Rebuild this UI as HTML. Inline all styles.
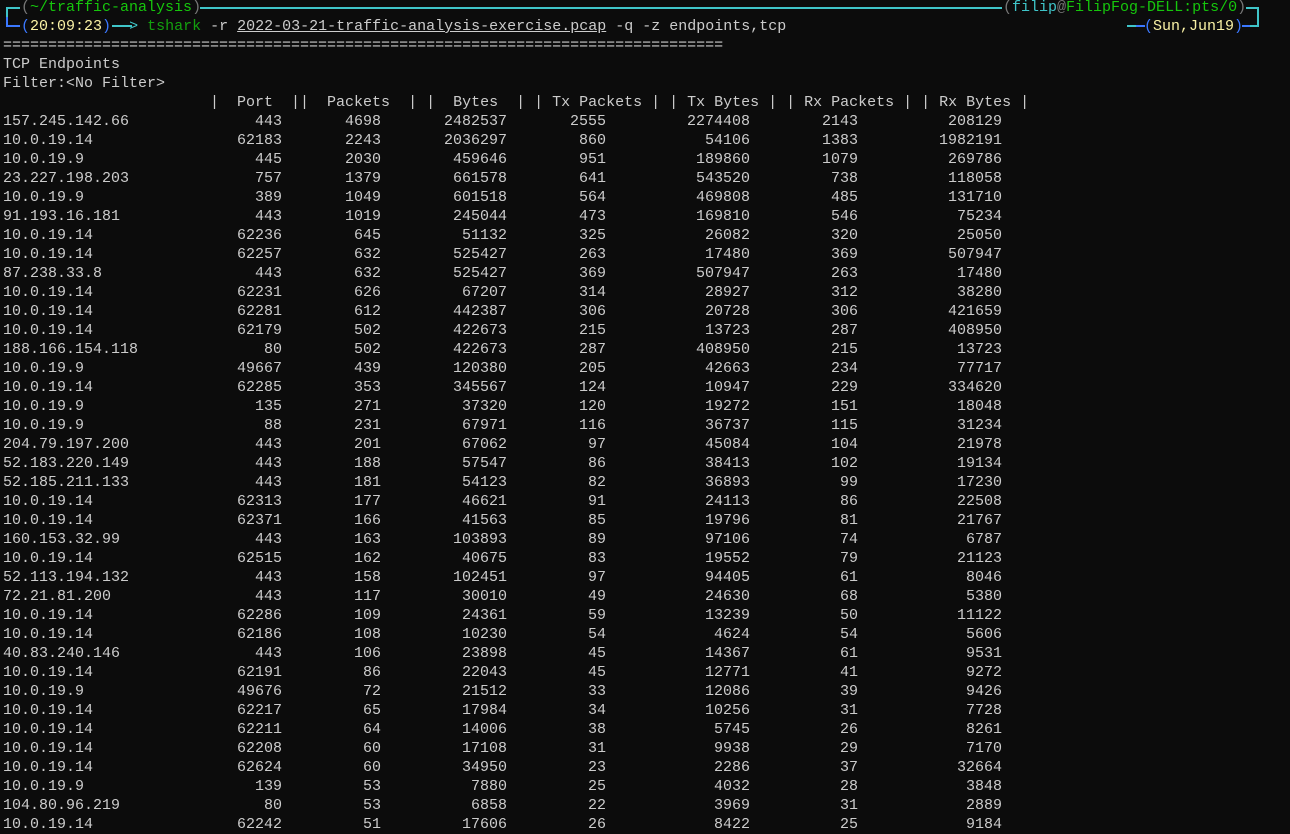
<!DOCTYPE html>
<html><head><meta charset="utf-8"><style>
html,body{margin:0;padding:0;background:#0c0c0c;width:1290px;height:834px;overflow:hidden}
#t{position:absolute;left:3px;top:-2px;font-family:"Liberation Mono",monospace;font-size:15px;line-height:19px;color:#cccccc;white-space:pre}
.ab{position:absolute;font-family:"Liberation Mono",monospace;font-size:15px;line-height:19px;white-space:pre}
.r span{display:inline-block;text-align:right}
.r span:first-child{text-align:left;width:207px}
.b{width:72px}.c{width:99px}.d{width:126px}.e{width:99px}.f{width:144px}.g{width:108px}.h{width:144px}
.ln{position:absolute;background:#3fc5c9}
.bl{background:#3b78ff}
.cy{color:#3fc5c9}.gr{color:#16c60c}.gy{color:#767676}.yl{color:#f9f1a5}.bu{color:#3b78ff}.dg{color:#13a10e}
</style></head><body>
<div class="ln" style="left:6px;top:7px;width:2px;height:10px"></div>
<div class="ln" style="left:6px;top:7px;width:14px;height:2px"></div>
<div class="ln bl" style="left:6px;top:17px;width:2px;height:10px"></div>
<div class="ln bl" style="left:6px;top:25px;width:14px;height:2px"></div>
<div class="ln" style="left:200px;top:7px;width:802px;height:2px"></div>
<div class="ln" style="left:1246px;top:7px;width:13px;height:2px"></div>
<div class="ln" style="left:1257px;top:7px;width:2px;height:20px"></div>
<div class="ln" style="left:1250px;top:25px;width:9px;height:2px"></div>
<div class="ln bl" style="left:1242px;top:25px;width:8px;height:2px"></div>
<div class="ln" style="left:1127px;top:25px;width:9px;height:2px"></div>
<div class="ln bl" style="left:1136px;top:25px;width:9px;height:2px"></div>
<div class="ln" style="left:112px;top:25px;width:20px;height:2px"></div>
<div class="ab" style="left:1003px;top:-2px"><span class="gy">(</span><span class="cy">filip</span><span class="gy">@</span><span class="gr">FilipFog-DELL:pts/0</span><span class="gy">)</span></div>
<div class="ab" style="left:1144px;top:17px"><span class="bu">(</span><span class="yl">Sun,Jun19</span><span class="bu">)</span></div>
<div id="t"><div>  <span class="gy">(</span><span class="gr">~/traffic-analysis</span><span class="gy">)</span></div><div>  <span class="bu">(</span><span class="yl">20:09:23</span><span class="bu">)</span>  <span class="cy">&gt;</span> <span class="dg">tshark</span> -r <u>2022-03-21-traffic-analysis-exercise.pcap</u> -q -z endpoints,tcp</div><div>================================================================================</div><div>TCP Endpoints</div><div>Filter:&lt;No Filter&gt;</div><div>                       |  Port  ||  Packets  | |  Bytes  | | Tx Packets | | Tx Bytes | | Rx Packets | | Rx Bytes |</div><div class="r"><span>157.245.142.66</span><span class="b">443</span><span class="c">4698</span><span class="d">2482537</span><span class="e">2555</span><span class="f">2274408</span><span class="g">2143</span><span class="h">208129</span></div><div class="r"><span>10.0.19.14</span><span class="b">62183</span><span class="c">2243</span><span class="d">2036297</span><span class="e">860</span><span class="f">54106</span><span class="g">1383</span><span class="h">1982191</span></div><div class="r"><span>10.0.19.9</span><span class="b">445</span><span class="c">2030</span><span class="d">459646</span><span class="e">951</span><span class="f">189860</span><span class="g">1079</span><span class="h">269786</span></div><div class="r"><span>23.227.198.203</span><span class="b">757</span><span class="c">1379</span><span class="d">661578</span><span class="e">641</span><span class="f">543520</span><span class="g">738</span><span class="h">118058</span></div><div class="r"><span>10.0.19.9</span><span class="b">389</span><span class="c">1049</span><span class="d">601518</span><span class="e">564</span><span class="f">469808</span><span class="g">485</span><span class="h">131710</span></div><div class="r"><span>91.193.16.181</span><span class="b">443</span><span class="c">1019</span><span class="d">245044</span><span class="e">473</span><span class="f">169810</span><span class="g">546</span><span class="h">75234</span></div><div class="r"><span>10.0.19.14</span><span class="b">62236</span><span class="c">645</span><span class="d">51132</span><span class="e">325</span><span class="f">26082</span><span class="g">320</span><span class="h">25050</span></div><div class="r"><span>10.0.19.14</span><span class="b">62257</span><span class="c">632</span><span class="d">525427</span><span class="e">263</span><span class="f">17480</span><span class="g">369</span><span class="h">507947</span></div><div class="r"><span>87.238.33.8</span><span class="b">443</span><span class="c">632</span><span class="d">525427</span><span class="e">369</span><span class="f">507947</span><span class="g">263</span><span class="h">17480</span></div><div class="r"><span>10.0.19.14</span><span class="b">62231</span><span class="c">626</span><span class="d">67207</span><span class="e">314</span><span class="f">28927</span><span class="g">312</span><span class="h">38280</span></div><div class="r"><span>10.0.19.14</span><span class="b">62281</span><span class="c">612</span><span class="d">442387</span><span class="e">306</span><span class="f">20728</span><span class="g">306</span><span class="h">421659</span></div><div class="r"><span>10.0.19.14</span><span class="b">62179</span><span class="c">502</span><span class="d">422673</span><span class="e">215</span><span class="f">13723</span><span class="g">287</span><span class="h">408950</span></div><div class="r"><span>188.166.154.118</span><span class="b">80</span><span class="c">502</span><span class="d">422673</span><span class="e">287</span><span class="f">408950</span><span class="g">215</span><span class="h">13723</span></div><div class="r"><span>10.0.19.9</span><span class="b">49667</span><span class="c">439</span><span class="d">120380</span><span class="e">205</span><span class="f">42663</span><span class="g">234</span><span class="h">77717</span></div><div class="r"><span>10.0.19.14</span><span class="b">62285</span><span class="c">353</span><span class="d">345567</span><span class="e">124</span><span class="f">10947</span><span class="g">229</span><span class="h">334620</span></div><div class="r"><span>10.0.19.9</span><span class="b">135</span><span class="c">271</span><span class="d">37320</span><span class="e">120</span><span class="f">19272</span><span class="g">151</span><span class="h">18048</span></div><div class="r"><span>10.0.19.9</span><span class="b">88</span><span class="c">231</span><span class="d">67971</span><span class="e">116</span><span class="f">36737</span><span class="g">115</span><span class="h">31234</span></div><div class="r"><span>204.79.197.200</span><span class="b">443</span><span class="c">201</span><span class="d">67062</span><span class="e">97</span><span class="f">45084</span><span class="g">104</span><span class="h">21978</span></div><div class="r"><span>52.183.220.149</span><span class="b">443</span><span class="c">188</span><span class="d">57547</span><span class="e">86</span><span class="f">38413</span><span class="g">102</span><span class="h">19134</span></div><div class="r"><span>52.185.211.133</span><span class="b">443</span><span class="c">181</span><span class="d">54123</span><span class="e">82</span><span class="f">36893</span><span class="g">99</span><span class="h">17230</span></div><div class="r"><span>10.0.19.14</span><span class="b">62313</span><span class="c">177</span><span class="d">46621</span><span class="e">91</span><span class="f">24113</span><span class="g">86</span><span class="h">22508</span></div><div class="r"><span>10.0.19.14</span><span class="b">62371</span><span class="c">166</span><span class="d">41563</span><span class="e">85</span><span class="f">19796</span><span class="g">81</span><span class="h">21767</span></div><div class="r"><span>160.153.32.99</span><span class="b">443</span><span class="c">163</span><span class="d">103893</span><span class="e">89</span><span class="f">97106</span><span class="g">74</span><span class="h">6787</span></div><div class="r"><span>10.0.19.14</span><span class="b">62515</span><span class="c">162</span><span class="d">40675</span><span class="e">83</span><span class="f">19552</span><span class="g">79</span><span class="h">21123</span></div><div class="r"><span>52.113.194.132</span><span class="b">443</span><span class="c">158</span><span class="d">102451</span><span class="e">97</span><span class="f">94405</span><span class="g">61</span><span class="h">8046</span></div><div class="r"><span>72.21.81.200</span><span class="b">443</span><span class="c">117</span><span class="d">30010</span><span class="e">49</span><span class="f">24630</span><span class="g">68</span><span class="h">5380</span></div><div class="r"><span>10.0.19.14</span><span class="b">62286</span><span class="c">109</span><span class="d">24361</span><span class="e">59</span><span class="f">13239</span><span class="g">50</span><span class="h">11122</span></div><div class="r"><span>10.0.19.14</span><span class="b">62186</span><span class="c">108</span><span class="d">10230</span><span class="e">54</span><span class="f">4624</span><span class="g">54</span><span class="h">5606</span></div><div class="r"><span>40.83.240.146</span><span class="b">443</span><span class="c">106</span><span class="d">23898</span><span class="e">45</span><span class="f">14367</span><span class="g">61</span><span class="h">9531</span></div><div class="r"><span>10.0.19.14</span><span class="b">62191</span><span class="c">86</span><span class="d">22043</span><span class="e">45</span><span class="f">12771</span><span class="g">41</span><span class="h">9272</span></div><div class="r"><span>10.0.19.9</span><span class="b">49676</span><span class="c">72</span><span class="d">21512</span><span class="e">33</span><span class="f">12086</span><span class="g">39</span><span class="h">9426</span></div><div class="r"><span>10.0.19.14</span><span class="b">62217</span><span class="c">65</span><span class="d">17984</span><span class="e">34</span><span class="f">10256</span><span class="g">31</span><span class="h">7728</span></div><div class="r"><span>10.0.19.14</span><span class="b">62211</span><span class="c">64</span><span class="d">14006</span><span class="e">38</span><span class="f">5745</span><span class="g">26</span><span class="h">8261</span></div><div class="r"><span>10.0.19.14</span><span class="b">62208</span><span class="c">60</span><span class="d">17108</span><span class="e">31</span><span class="f">9938</span><span class="g">29</span><span class="h">7170</span></div><div class="r"><span>10.0.19.14</span><span class="b">62624</span><span class="c">60</span><span class="d">34950</span><span class="e">23</span><span class="f">2286</span><span class="g">37</span><span class="h">32664</span></div><div class="r"><span>10.0.19.9</span><span class="b">139</span><span class="c">53</span><span class="d">7880</span><span class="e">25</span><span class="f">4032</span><span class="g">28</span><span class="h">3848</span></div><div class="r"><span>104.80.96.219</span><span class="b">80</span><span class="c">53</span><span class="d">6858</span><span class="e">22</span><span class="f">3969</span><span class="g">31</span><span class="h">2889</span></div><div class="r"><span>10.0.19.14</span><span class="b">62242</span><span class="c">51</span><span class="d">17606</span><span class="e">26</span><span class="f">8422</span><span class="g">25</span><span class="h">9184</span></div></div>
</body></html>
